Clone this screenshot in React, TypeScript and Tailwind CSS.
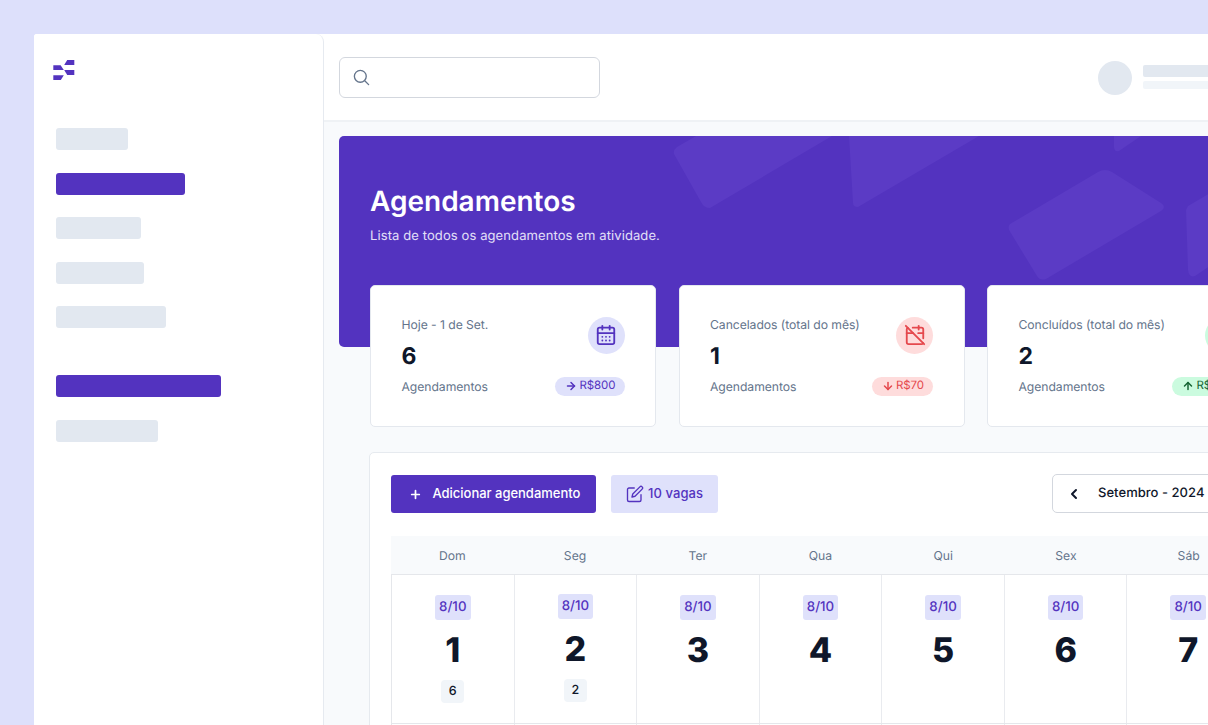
import React from "react";
import { ArrowDown, ArrowRight, ArrowUp, CalendarCheck, CalendarDays, CalendarOff, ChevronLeft, ChevronRight, Plus } from "lucide-react";
import { HiOutlineMagnifyingGlass } from "react-icons/hi2";
import { FiEdit } from "react-icons/fi";

function Logo() {
  return (
    <svg width="22" height="20" viewBox="0 0 22 20" fill="#5333bf" className="ml-[19px] block">
      <path d="M14.2 0H21.3V5H11.2Z" />
      <path d="M0.3 5.2H7.6L10.8 10.1H0.3Z" />
      <path d="M11.2 10.1H21.3V14.9H14.2Z" />
      <path d="M0.3 15.2H10.8L7.8 20H0.3Z" />
    </svg>
  );
}

function Sidebar() {
  const grey = "h-[22px] rounded-[3px] bg-[#e2e8f0]";
  const purple = "h-[22px] rounded-[3px] bg-[#5333bf]";
  return (
    <aside className="h-full w-[290px] shrink-0 rounded-tr-lg border-r border-[#e6eaf0] bg-white pt-[26px]">
      <Logo />
      <div className="ml-[22px] mt-[48px] flex flex-col gap-[22.5px]">
        <div className={`${grey} w-[72px]`} />
        <div className={`${purple} w-[129px]`} />
        <div className={`${grey} w-[85px]`} />
        <div className={`${grey} w-[88px]`} />
        <div className={`${grey} w-[110px]`} />
      </div>
      <div className="ml-[22px] mt-[47px] flex flex-col gap-[23px]">
        <div className={`${purple} w-[165px]`} />
        <div className={`${grey} w-[102px]`} />
      </div>
    </aside>
  );
}

function Header() {
  return (
    <header className="flex h-[88px] shrink-0 items-start justify-between border-b-2 border-[#eff2f5] bg-white pl-[15px]">
      <div className="mt-[23px] flex h-[41px] w-[261px] items-center rounded-md border border-[#d3d7de] pl-[12px]">
        <HiOutlineMagnifyingGlass className="size-[19px] text-[#64748b]" strokeWidth={1.7} />
      </div>
      <div className="mt-[27px] flex gap-[11px]">
        <div className="size-[34px] rounded-full bg-[#e2e8f0]" />
        <div className="mt-1 flex w-[161px] flex-col gap-1">
          <div className="h-3 rounded-[2px] bg-[#e2e8f0]" />
          <div className="h-2 rounded-[2px] bg-[#f1f5f9]" />
        </div>
      </div>
    </header>
  );
}

function BannerPattern() {
  return (
    <svg className="absolute left-0 top-0" width="900" height="211" viewBox="339 136 900 211" fill="#5b3bc5">
      <path d="M696 136H832L710 208Q704 208 701 202L674 154Q673 150 677 147Z" />
      <path d="M849 136H979L858 207Q853 207 853 203Z" />
      <path d="M1114 136H1141L1119 151Q1114 152 1114 147Z" />
      <path d="M1010 224L1098 172Q1105 168 1112 172L1161 203Q1167 207 1161 211L1046 279Q1040 281 1037 276L1009 230Q1008 226 1010 224Z" />
      <path d="M1188 206L1239 176V246L1195 276Q1189 278 1188 270L1186 210Z" />
    </svg>
  );
}

type StatProps = {
  title: string;
  value: string;
  amount: string;
  icon: React.ReactNode;
  arrow: React.ReactNode;
  tone: string;
};

function StatCard({ title, value, amount, icon, arrow, tone }: StatProps) {
  return (
    <div className="flex h-[142px] w-[286px] justify-between rounded-[5px] border border-[#e4e8ee] bg-white pl-[30.5px] pr-[30.5px] pt-[30px]">
      <div className="whitespace-nowrap">
        <div className="text-[12.2px] leading-[18px] text-[#64748b] tracking-[-0.06px]">{title}</div>
        <div className="mt-[6px] text-[23px] font-bold leading-[32px] text-[#0f172a]">{value}</div>
        <div className="mt-[6px] text-[12.2px] leading-[18px] text-[#64748b] tracking-[-0.06px]">Agendamentos</div>
      </div>
      <div className="flex flex-col items-end pt-[0.5px]">
        <div className={`flex size-[37px] items-center justify-center rounded-full ${tone}`}>{icon}</div>
        <div className={`mt-[23px] flex h-[19px] items-center gap-[2px] whitespace-nowrap rounded-full pl-[10px] pr-[9px] text-[11.5px] tracking-[-0.06px] ${tone}`}>
          {arrow}
          <span>{amount}</span>
        </div>
      </div>
    </div>
  );
}

const days = [
  { name: "Dom", day: 1, count: 6 },
  { name: "Seg", day: 2, count: 2 },
  { name: "Ter", day: 3 },
  { name: "Qua", day: 4 },
  { name: "Qui", day: 5 },
  { name: "Sex", day: 6 },
  { name: "Sáb", day: 7 },
];

function Calendar() {
  return (
    <section className="ml-[45px] mt-[25px] h-[400px] w-[903px] shrink-0 rounded-[5px] border border-[#e6eaef] bg-white px-[21px] pt-[21px]">
      <div className="flex h-[40px] items-center">
        <button className="flex h-[38px] w-[205px] items-center rounded-[3px] bg-[#5333bf] pl-[18px] text-white">
          <Plus className="size-[13px]" strokeWidth={3.2} />
          <span className="ml-[10.5px] whitespace-nowrap text-[13px] font-medium tracking-[-0.02px]">Adicionar agendamento</span>
        </button>
        <button className="ml-[15px] flex h-[38px] w-[107px] items-center rounded-[3px] bg-[#dfe1fb] pl-[15px] text-[#5333bf]">
          <FiEdit className="size-[18px]" strokeWidth={1.8} />
          <span className="ml-[4px] whitespace-nowrap text-[13px] font-medium tracking-[0.08px]">10 vagas</span>
        </button>
        <div className="-mt-px ml-auto flex h-[39px] w-[198px] shrink-0 items-center rounded-[5px] border border-[#d3d7de] px-[13px] text-[#0f172a]">
          <ChevronLeft className="size-4" strokeWidth={3} />
          <span className="ml-[16px] whitespace-nowrap pt-px text-[13px] font-medium tracking-[0.04px]">Setembro - 2024</span>
          <ChevronRight className="ml-auto size-4" strokeWidth={3} />
        </div>
      </div>
      <div className="mt-[22px] grid h-[39px] grid-cols-7 items-center border-b border-[#e5e7eb] bg-[#f8fafc] pt-[2px] text-center text-[12.2px] text-[#64748b]">
        {days.map((d) => (
          <div key={d.name}>{d.name}</div>
        ))}
      </div>
      <div className="grid h-[149px] grid-cols-7 border-b border-l border-[#e5e7eb]">
        {days.map((d) => (
          <div key={d.day} className={`flex flex-col items-center border-r border-[#e9ebef] ${d.day === 2 ? "pt-[19px]" : "pt-[20px]"}`}>
            <div className="flex h-[25px] w-[35.5px] items-center justify-center rounded-[3px] bg-[#dfe1fb] pt-px text-[13.3px] font-medium text-[#5333bf]">8/10</div>
            <div className="mt-[10px] text-[34px] font-extrabold leading-[42px] text-[#0f172a]">{d.day}</div>
            {d.count && (
              <div className="mt-[8px] flex size-[23px] items-center justify-center rounded-[4px] bg-[#f1f5f9] pt-px text-[12.5px] font-medium text-[#0f172a]">{d.count}</div>
            )}
          </div>
        ))}
      </div>
      <div className="grid h-[149px] grid-cols-7 border-l border-[#e5e7eb]">
        {days.map((d) => (
          <div key={d.day} className="border-r border-[#e9ebef]" />
        ))}
      </div>
    </section>
  );
}

export default function App() {
  return (
    <div className="h-[725px] w-[1208px] overflow-hidden bg-[#dde0fb] pl-[34px] pt-[34px] font-['Inter',sans-serif] [text-rendering:geometricPrecision]">
      <div className="flex h-[691px] w-[1270px] overflow-hidden rounded-tl-[3px] bg-white">
        <Sidebar />
        <main className="flex min-w-0 grow flex-col bg-[#f8fafc]">
          <Header />
          <div className="relative ml-[15px] mt-[14px] h-[211px] w-[930px] shrink-0 rounded-[5px] bg-[#5333bf]">
            <BannerPattern />
            <div className="relative pl-[31px] pt-[47px] text-white">
              <h1 className="text-[28px] font-semibold leading-[36px]">Agendamentos</h1>
              <p className="mt-[7px] text-[13px] leading-[20px] tracking-[0.1px] text-[#e4e0f8]">Lista de todos os agendamentos em atividade.</p>
            </div>
          </div>
          <div className="relative -mt-[62px] ml-[46px] flex shrink-0 gap-[22.5px]">
            <StatCard title="Hoje - 1 de Set." value="6" amount="R$800" tone="bg-[#dfe1fb] text-[#5333bf]" icon={<CalendarDays className="size-[22px]" />} arrow={<ArrowRight className="size-3" strokeWidth={3} />} />
            <StatCard title="Cancelados (total do mês)" value="1" amount="R$70" tone="bg-[#fedcdc] text-[#e5484d]" icon={<CalendarOff className="size-[22px]" />} arrow={<ArrowDown className="size-3" strokeWidth={3} />} />
            <StatCard title="Concluídos (total do mês)" value="2" amount="R$200" tone="bg-[#cbfbdf] text-[#166534]" icon={<CalendarCheck className="size-[22px]" />} arrow={<ArrowUp className="size-3" strokeWidth={3} />} />
          </div>
          <Calendar />
        </main>
      </div>
    </div>
  );
}
